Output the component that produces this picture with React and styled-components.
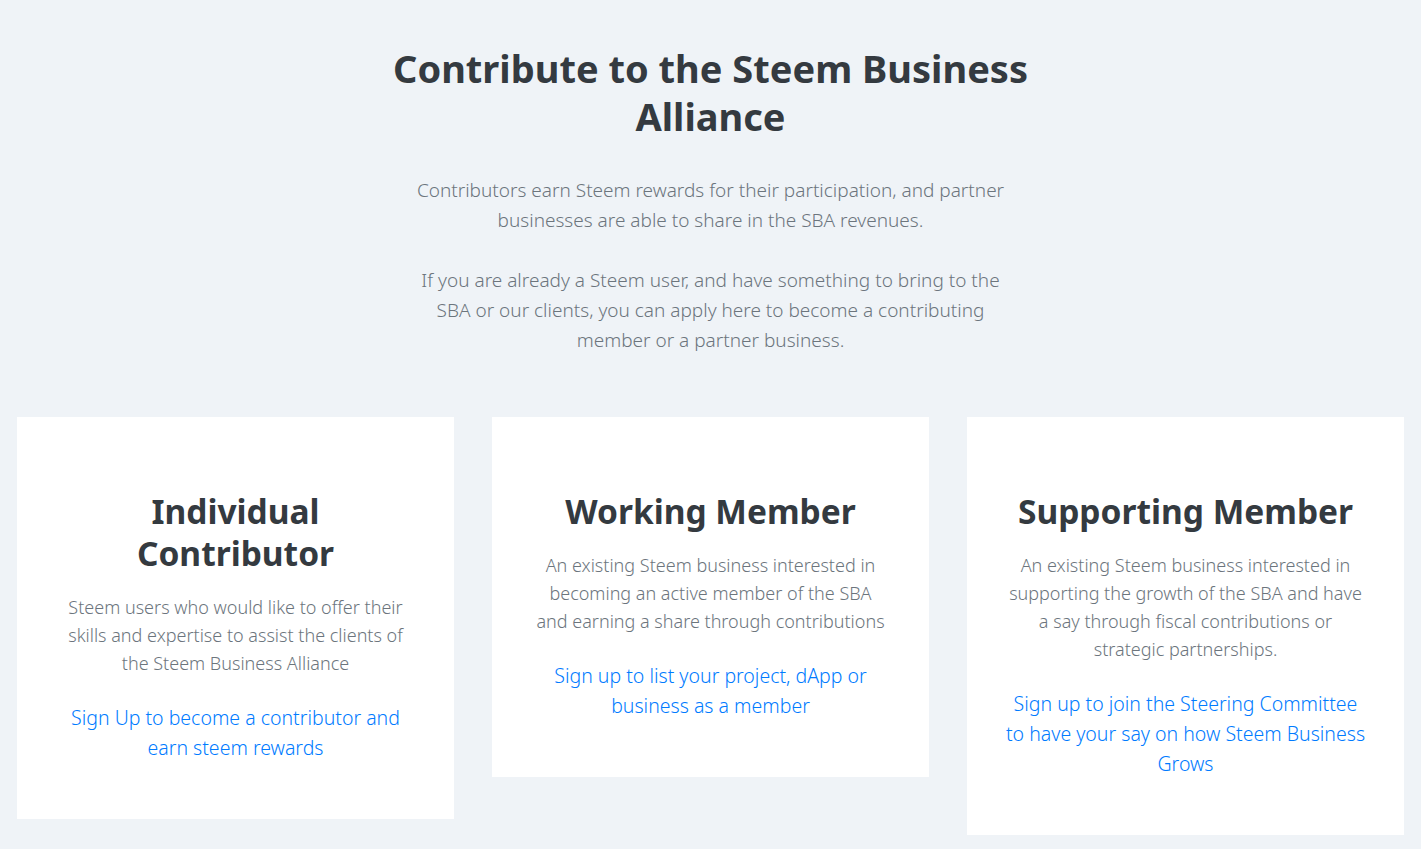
import React from 'react';
import styled, {createGlobalStyle} from 'styled-components';

const GlobalStyle = createGlobalStyle`
  body {
    margin: 0;
    background-color: #eff3f7;
    font-family: "Noto Sans", "Open Sans", sans-serif;
    color: #343a40;
  }
`;

const Page = styled.div`
  padding: 44px 17px 16px;
`;

const Intro = styled.section`
  display: flex;
  flex-direction: column;
  align-items: center;
  text-align: center;
`;

const Title = styled.h1`
  max-width: 680px;
  margin: 0 0 35px;
  font-size: 38px;
  line-height: 48px;
  font-weight: 700;
  color: #343a40;
`;

const Lead = styled.p`
  max-width: 600px;
  margin: 0 0 62px;
  font-size: 19px;
  line-height: 30px;
  font-weight: 300;
  color: #6c757d;
`;

const Cards = styled.div`
  display: grid;
  grid-template-columns: repeat(3, 1fr);
  gap: 38px;
  align-items: start;
`;

const Card = styled.div`
  background: #fff;
  padding: 73px 38px 56px;
  text-align: center;
`;

const CardTitle = styled.h2`
  margin: 0 auto 19px;
  max-width: ${p => p.$narrow ? '260px' : 'none'};
  font-size: 33.5px;
  line-height: 42px;
  font-weight: 700;
  color: #343a40;
`;

const CardText = styled.p`
  margin: 0 0 26px;
  padding: 0 3px;
  font-size: 18px;
  line-height: 28px;
  font-weight: 300;
  color: #6c757d;
`;

const CardLink = styled.a`
  display: block;
  font-size: 19.5px;
  line-height: 30px;
  font-weight: 300;
  color: #007bff;
  text-decoration: none;
`;

const cards = [
  {
    title: 'Individual Contributor',
    narrow: true,
    text: 'Steem users who would like to offer their skills and expertise to assist the clients of the Steem Business Alliance',
    link: 'Sign Up to become a contributor and earn steem rewards',
  },
  {
    title: 'Working Member',
    text: 'An existing Steem business interested in becoming an active member of the SBA and earning a share through contributions',
    link: 'Sign up to list your project, dApp or business as a member',
  },
  {
    title: 'Supporting Member',
    text: 'An existing Steem business interested in supporting the growth of the SBA and have a say through fiscal contributions or strategic partnerships.',
    link: 'Sign up to join the Steering Committee to have your say on how Steem Business Grows',
  },
];

const App = () => (
  <Page>
    <GlobalStyle/>
    <Intro>
      <Title>Contribute to the Steem Business Alliance</Title>
      <Lead>
        Contributors earn Steem rewards for their participation, and partner businesses are able to share in the SBA revenues.
        <br/><br/>
        If you are already a Steem user, and have something to bring to the SBA or our clients, you can apply here to become a contributing member or a partner business.
      </Lead>
    </Intro>
    <Cards>
      {cards.map(card => (
        <Card key={card.title}>
          <CardTitle $narrow={card.narrow}>{card.title}</CardTitle>
          <CardText>{card.text}</CardText>
          <CardLink href="#">{card.link}</CardLink>
        </Card>
      ))}
    </Cards>
  </Page>
);

export default App;
